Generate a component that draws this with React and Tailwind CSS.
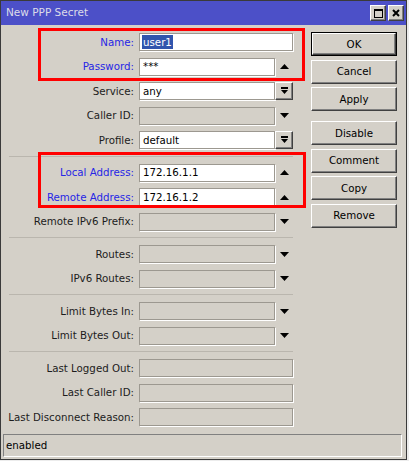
import React from "react";

const F = "font-['DejaVu_Sans',sans-serif]";

function Up() {
  return (
    <svg width="9" height="5" viewBox="0 0 9 5"><polygon points="0,5 9,5 4.5,0" fill="#000" /></svg>
  );
}
function Down() {
  return (
    <svg width="9" height="5" viewBox="0 0 9 5"><polygon points="0,0 9,0 4.5,5" fill="#000" /></svg>
  );
}
function DropBox() {
  return (
    <div className="flex h-[18px] w-[18px] items-center justify-center border border-t-white border-l-white border-b-[#404040] border-r-[#404040] bg-[#d4d0c8] shadow-[inset_-1px_-1px_0_#808080]">
      <svg width="7" height="8" viewBox="0 0 7 8">
        <rect x="0" y="0" width="7" height="2" fill="#000" />
        <polygon points="0,3 7,3 3.5,7" fill="#000" />
      </svg>
    </div>
  );
}

function Row({ label, blue, value, selected, kind = "none", white }) {
  const full = kind === "full";
  return (
    <div className="flex h-[24.5px] items-center">
      <div className={`w-[133px] text-right leading-none ${blue ? "text-[#2626e6]" : "text-[#1c1c1c]"}`}>{label}:</div>
      <div
        className={`ml-[5px] flex h-[18px] items-center border border-[#9c9890] shadow-[1px_1px_0_#ffffff] pl-[2px] text-black leading-none ${
          full ? "w-[154px]" : "w-[136px]"
        } ${white ? "bg-white" : "bg-[#d4d0c8]"}`}
      >
        {selected ? (
          <span className="bg-[#3155ad] px-[1px] py-[2px] text-white">{value}</span>
        ) : (
          value && <span className="pl-[1px]">{value}</span>
        )}
      </div>
      {!full && (
        <div className="flex h-[18px] w-[18px] items-center justify-center">
          {kind === "up" && <Up />}
          {kind === "down" && <Down />}
          {kind === "box" && <DropBox />}
        </div>
      )}
    </div>
  );
}

function Sep() {
  return (
    <div className="flex h-[8px] items-center">
      <div className="ml-[8px] w-[284px] border-t border-[#bab6ae]" />
    </div>
  );
}

function Btn({ children, def }) {
  return (
    <div className={`h-[24px] w-[86px] ${def ? "border border-black" : ""}`}>
      <div className="flex h-full w-full items-center justify-center border border-t-white border-l-white border-b-[#404040] border-r-[#404040] bg-[#d4d0c8] shadow-[inset_-1px_-1px_0_#808080] text-black leading-none">
        {children}
      </div>
    </div>
  );
}

function TitleBtn({ children }) {
  return (
    <div className="flex h-[16px] w-[16px] items-center justify-center border border-t-white border-l-white border-b-[#404040] border-r-[#404040] bg-[#d4d0c8] shadow-[inset_-1px_-1px_0_#808080]">
      {children}
    </div>
  );
}

export default function App() {
  return (
    <div className={`relative h-[461px] w-[409px] bg-[#ececec] text-[10.25px] ${F}`}>
      <div className="flex h-[460px] w-[407px] flex-col border border-[#3a3a3a] bg-[#d4d0c8]">
        <div className="flex h-[24px] items-center justify-between bg-[#4c50c8] pl-[5px] pr-[2px]">
          <span className="text-[10.5px] text-[#dcdce8]">New PPP Secret</span>
          <div className="flex gap-[2px]">
            <TitleBtn>
              <div className="h-[9px] w-[9px] border border-t-2 border-black" />
            </TitleBtn>
            <TitleBtn>
              <svg width="8" height="8" viewBox="0 0 8 8">
                <path d="M1 1 L7 7 M7 1 L1 7" stroke="#000" strokeWidth="2" />
              </svg>
            </TitleBtn>
          </div>
        </div>
        <div className="flex h-[409px]">
          <div className="w-[310px] pt-[4.75px]">
            <Row label="Name" blue value="user1" selected kind="full" white />
            <Row label="Password" blue value="***" kind="up" white />
            <Row label="Service" value="any" kind="box" white />
            <Row label="Caller ID" kind="down" />
            <Row label="Profile" value="default" kind="box" white />
            <Sep />
            <Row label="Local Address" blue value="172.16.1.1" kind="up" white />
            <Row label="Remote Address" blue value="172.16.1.2" kind="up" white />
            <Row label="Remote IPv6 Prefix" kind="down" />
            <Sep />
            <Row label="Routes" kind="down" />
            <Row label="IPv6 Routes" kind="down" />
            <Sep />
            <Row label="Limit Bytes In" kind="down" />
            <Row label="Limit Bytes Out" kind="down" />
            <Sep />
            <Row label="Last Logged Out" kind="full" />
            <Row label="Last Caller ID" kind="full" />
            <Row label="Last Disconnect Reason" kind="full" />
          </div>
          <div className="flex w-[86px] flex-col pt-[7px]">
            <div className="flex flex-col gap-[3.5px]">
              <Btn def>OK</Btn>
              <Btn>Cancel</Btn>
              <Btn>Apply</Btn>
            </div>
            <div className="mt-[10px] flex flex-col gap-[3.5px]">
              <Btn>Disable</Btn>
              <Btn>Comment</Btn>
              <Btn>Copy</Btn>
              <Btn>Remove</Btn>
            </div>
          </div>
        </div>
        <div className="ml-[2px] flex h-[23px] w-[399px] items-center border border-t-[#808080] border-l-[#808080] border-b-white border-r-white pl-[2px] text-black">
          enabled
        </div>
      </div>
      <div className="absolute left-[38px] top-[28px] h-[53px] w-[267px] border-[3px] border-[#ff0000]" />
      <div className="absolute left-[38px] top-[152px] h-[56px] w-[268px] border-[3px] border-[#ff0000]" />
    </div>
  );
}
